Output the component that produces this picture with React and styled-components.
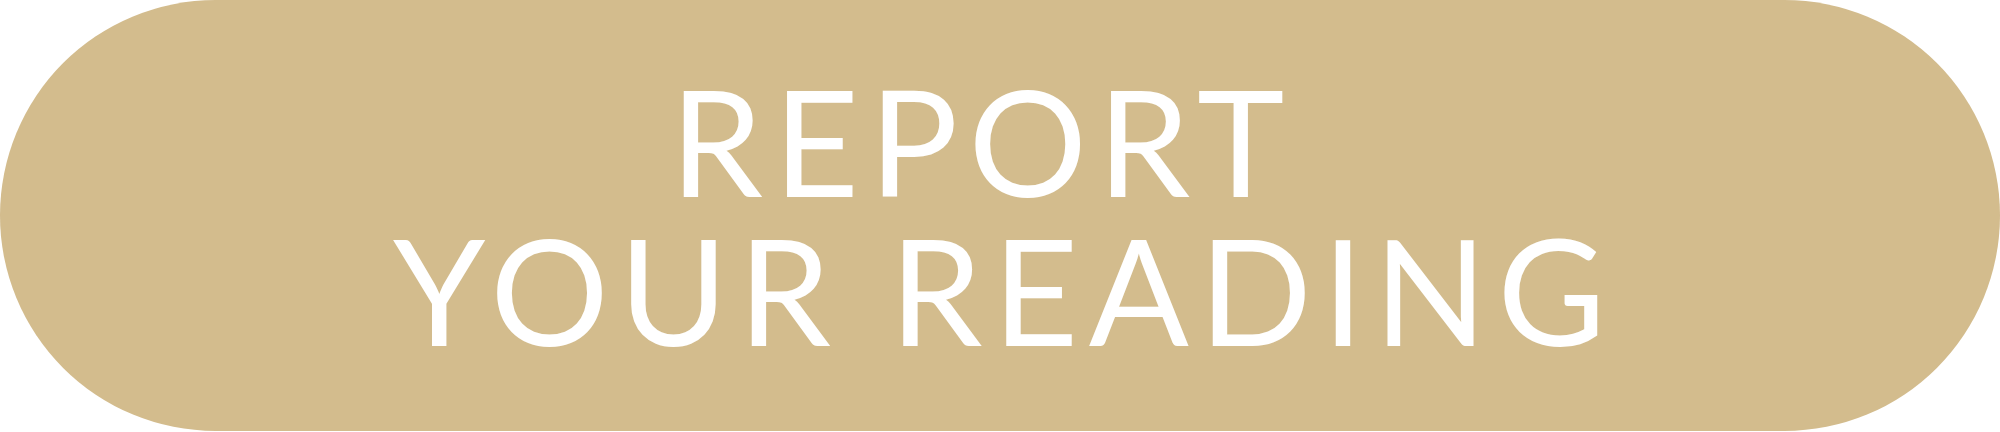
import React from 'react';
import styled, { createGlobalStyle } from 'styled-components';

const GlobalStyle = createGlobalStyle`
  html, body {
    margin: 0;
    padding: 0;
    background: #ffffff;
  }
`;

const App = () => {
    return (
        <>
            <GlobalStyle />
            <Page>
                <PillButton type="button">
                    <Label>
                        <Line>{'REPORT\u00A0'}</Line>
                        <Line>YOUR READING</Line>
                    </Label>
                </PillButton>
            </Page>
        </>
    );
}

const Page = styled.div`
   width: 2000px;
   height: 432px;
   display: flex;
   align-items: flex-start;
`;

const PillButton = styled.button`
   width: 2000px;
   height: 431px;
   margin: 0;
   padding: 0 0 2px 9px;
   border: none;
   border-radius: 216px;
   background: #d3bc8d;
   cursor: pointer;
   display: flex;
   align-items: center;
   justify-content: center;
`;

const Label = styled.span`
   display: flex;
   flex-direction: column;
   align-items: center;
   font-family: Lato, "Open Sans", sans-serif;
   font-weight: 400;
   font-size: 148px;
   line-height: 149px;
   letter-spacing: 10.4px;
   color: #ffffff;
`;

const Line = styled.span`
   white-space: nowrap;
`;

export default App;
